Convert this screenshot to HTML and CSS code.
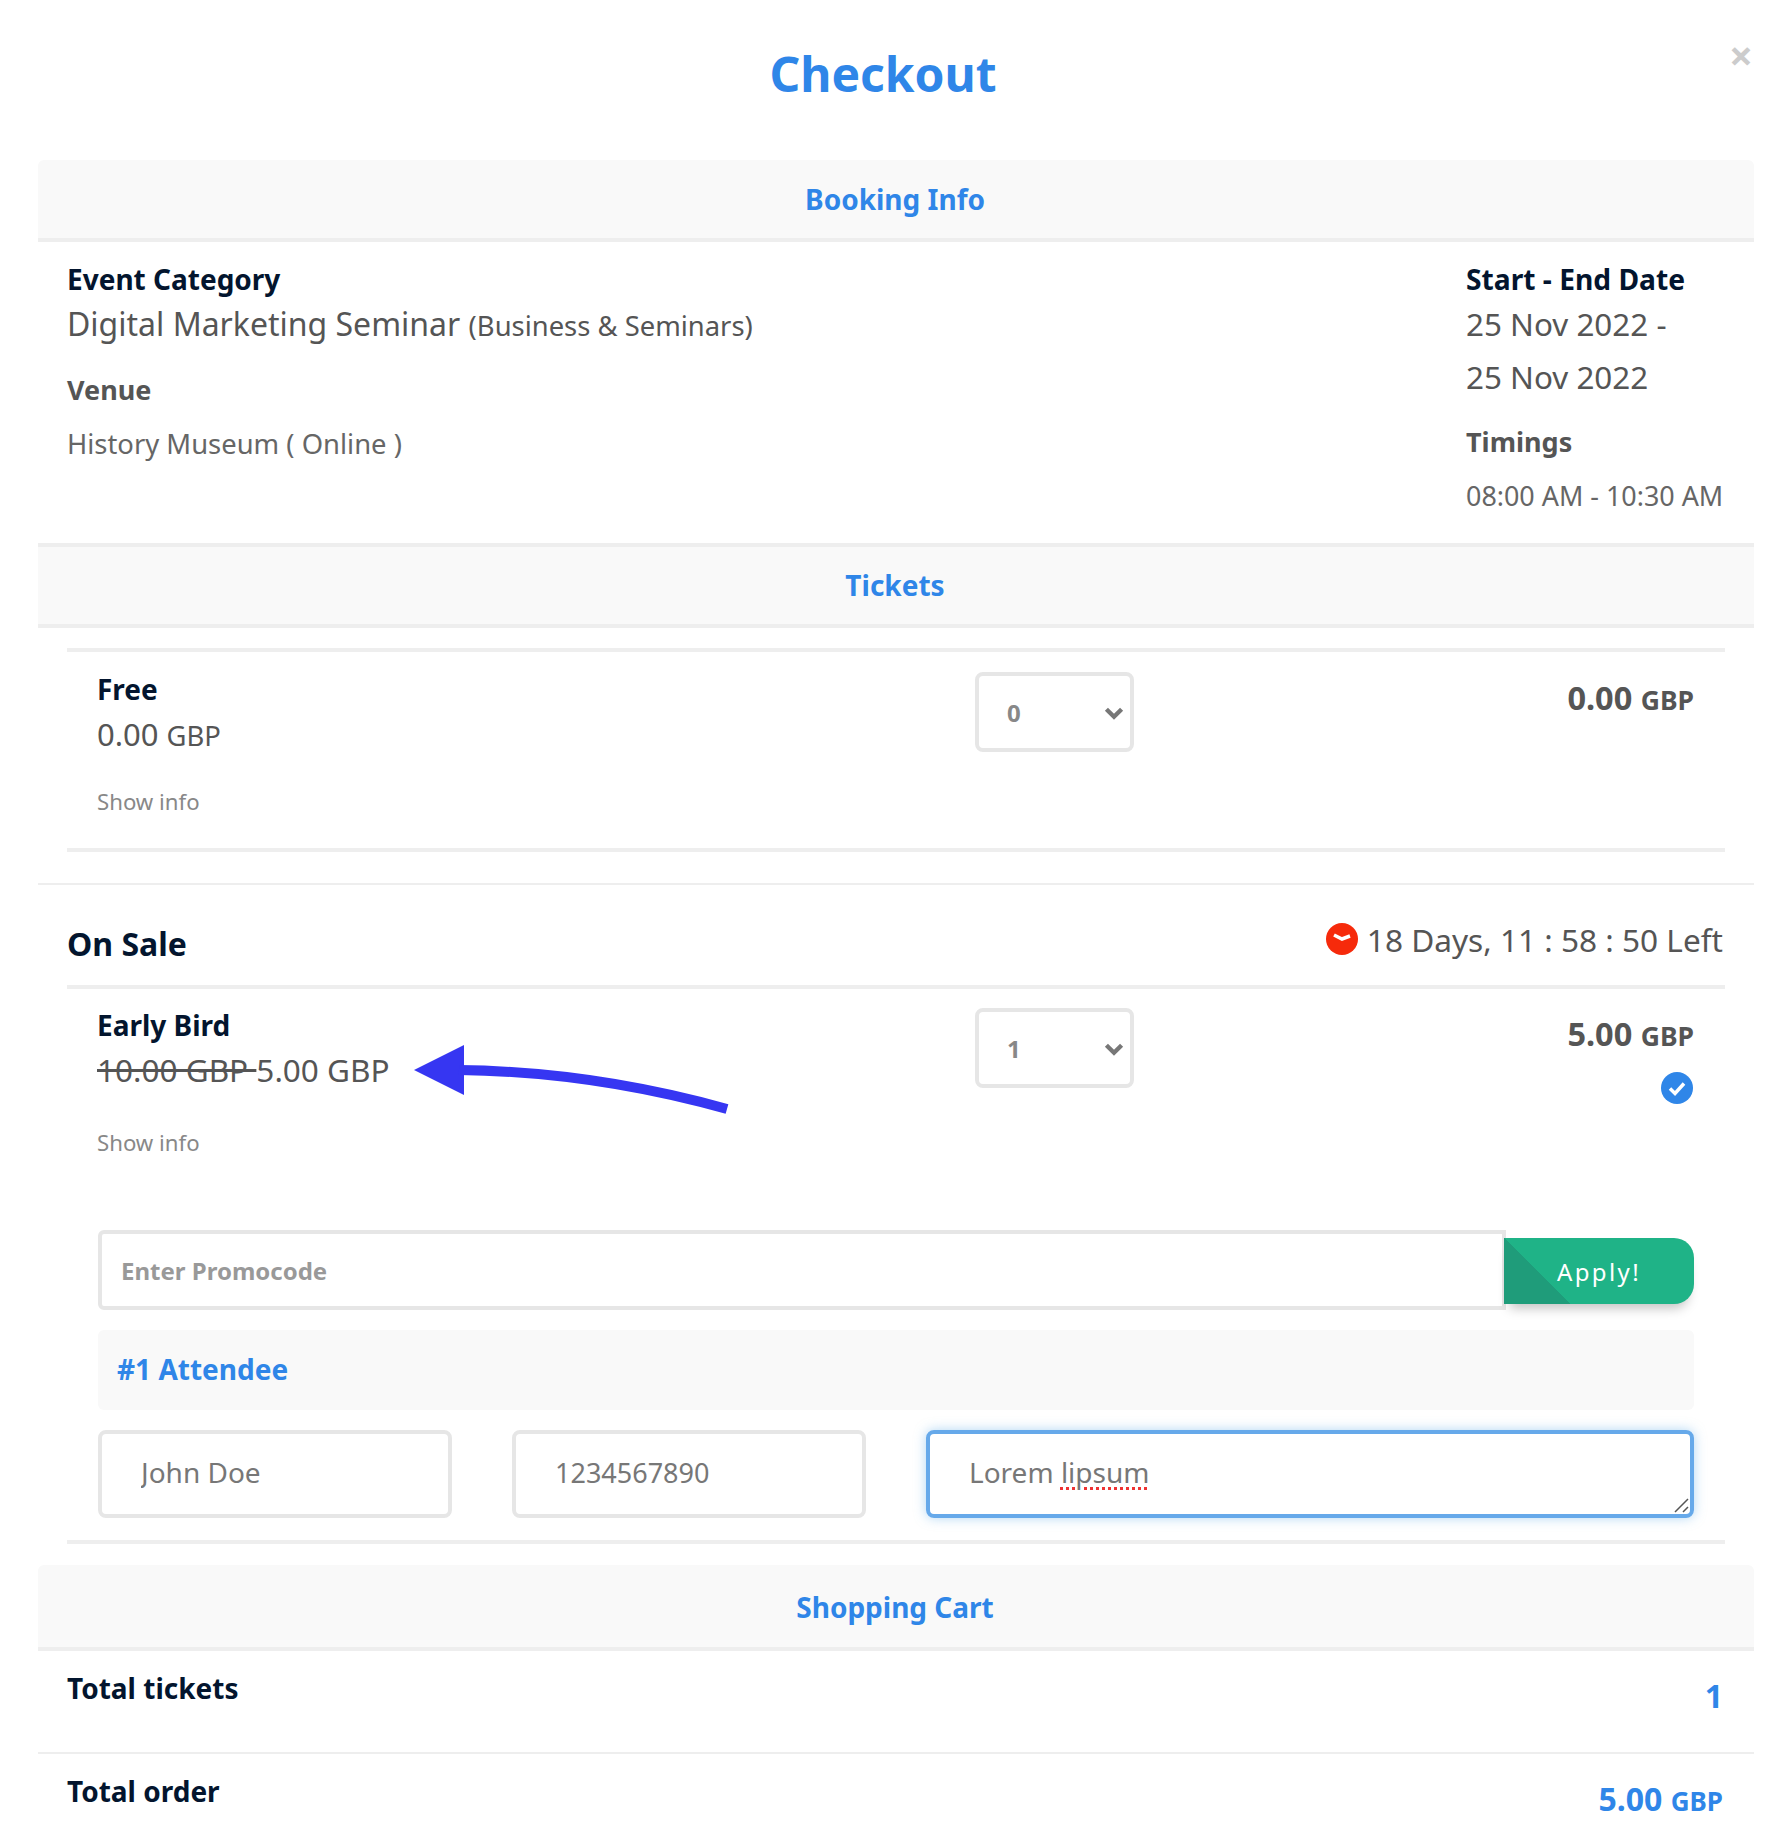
FILE: index.html
```html
<!doctype html>
<html lang="en">

<head>
    <title>Checkout</title>
    <link rel="stylesheet" href="styles.css">
</head>

<body>

    <div class="modal">
        <button class="close">×</button>
        <h1 class="title">Checkout</h1>

        <h3 class="section-head">Booking Info</h3>
        <div class="booking">
            <div>
                <h4 class="label">Event Category</h4>
                <p class="value">Digital Marketing Seminar <small>(Business &amp; Seminars)</small></p>
                <h5 class="sub-label venue">Venue</h5>
                <p class="sub-value">History Museum ( Online )</p>
            </div>
            <div class="booking-date">
                <h4 class="label">Start - End Date</h4>
                <p class="value date">25 Nov 2022 -</p>
                <p class="value date">25 Nov 2022</p>
                <h5 class="sub-label timings">Timings</h5>
                <p class="sub-value time">08:00 AM - 10:30 AM</p>
            </div>
        </div>

        <h3 class="section-head tickets-head">Tickets</h3>
        <div class="ticket ticket-free">
            <div>
                <h4 class="label">Free</h4>
                <p class="value price">0.00 <small>GBP</small></p>
                <a class="show-info">Show info</a>
            </div>
            <div class="select-wrap">
                <select>
                    <option>0</option>
                </select>
                <svg class="chevron" viewBox="0 0 18 12"><path d="M2 2l7 7 7-7" /></svg>
            </div>
            <p class="line-price">0.00 <small>GBP</small></p>
        </div>

        <div class="sale-head">
            <h2>On Sale</h2>
            <p class="countdown">
                <svg class="clock" viewBox="0 0 32 32"><circle cx="16" cy="16" r="16" /><path d="M8 12l8 4 8-3" /></svg>
                18 Days, 11 : 58 : 50 Left
            </p>
        </div>

        <div class="ticket ticket-sale">
            <div>
                <h4 class="label">Early Bird</h4>
                <p class="value price-sale"><s>10.00 GBP </s>5.00 GBP</p>
                <a class="show-info">Show info</a>
            </div>
            <div class="select-wrap">
                <select>
                    <option>1</option>
                </select>
                <svg class="chevron" viewBox="0 0 18 12"><path d="M2 2l7 7 7-7" /></svg>
            </div>
            <div>
                <p class="line-price">5.00 <small>GBP</small></p>
                <svg class="check" viewBox="0 0 32 32"><circle cx="16" cy="16" r="16" /><path d="M9 16.5l5 5 9-10" /></svg>
            </div>

            <div class="promo">
                <input type="text" placeholder="Enter Promocode">
                <button class="apply">Apply!</button>
            </div>
            <div class="attendee">#1 Attendee</div>
            <div class="fields">
                <input type="text" value="John Doe">
                <input class="phone" type="text" value="1234567890">
                <div class="notes">Lorem <span class="typo">lipsum</span>
                    <svg class="grip" viewBox="0 0 16 16"><path d="M2 15L15 2M10 15l5-5" /></svg>
                </div>
            </div>
        </div>

        <!-- arrow drawn on top of the price -->
        <svg class="arrow" viewBox="0 0 320 64">
            <path class="arrow-head" d="M0 25L50 0V50Z" />
            <path class="arrow-tail" d="M45 25C130 26 220 38 313 64" />
        </svg>

        <h3 class="section-head cart-head">Shopping Cart</h3>
        <div class="total total-first">
            <h4 class="label">Total tickets</h4>
            <p class="total-value">1</p>
        </div>
        <div class="total total-last">
            <h4 class="label">Total order</h4>
            <p class="total-value">5.00 <small>GBP</small></p>
        </div>
    </div>

</body>

</html>
```

FILE: styles.css
```css
* {
    box-sizing: border-box;
}

body {
    font-family: "Noto Sans", sans-serif;
    margin: 0;
    padding: 0;
    background-color: white;
    color: #555;
}

h1,
h2,
h3,
h4,
h5,
p {
    margin: 0;
}

.modal {
    position: relative;
    height: 1848px;
    padding: 0 36px 0 38px;
    overflow: hidden;
}

.close {
    position: absolute;
    top: 30px;
    right: 37px;
    padding: 0;
    border: none;
    background: none;
    color: #ccc;
    font-family: inherit;
    font-size: 42px;
    font-weight: bold;
    line-height: 50px;
}

.title {
    height: 160px;
    padding: 42px 26px 0 0;
    text-align: center;
    color: #2f86e8;
    font-size: 48px;
    line-height: 64px;
}

.section-head {
    height: 82px;
    background-color: #f9f9f9;
    border-bottom: 4px solid #eee;
    border-radius: 6px 6px 0 0;
    padding-right: 2px;
    text-align: center;
    color: #2f86e8;
    font-size: 28px;
    line-height: 78px;
}

.tickets-head {
    height: 85px;
    border-top: 4px solid #eee;
    border-radius: 0;
    line-height: 76px;
}

.label {
    color: #03152e;
    font-size: 28px;
    line-height: 40px;
}

.value {
    font-size: 32px;
    line-height: 50px;
}

.value small {
    font-size: 27.4px;
}

.price {
    font-size: 31px;
}

.price-sale {
    font-size: 31.5px;
}

.sub-label {
    font-size: 27px;
    line-height: 40px;
}

.sub-value {
    margin-top: 14px;
    color: #666;
    font-size: 27.4px;
    line-height: 40px;
}

.time {
    font-size: 26.9px;
}

.booking {
    display: flex;
    justify-content: space-between;
    height: 301px;
    padding: 17px 0 0 29px;
}

.booking-date {
    width: 288px;
}

.booking-date .label {
    font-size: 28.2px;
}

.venue {
    margin-top: 19px;
}

.date {
    font-size: 31.4px;
    line-height: 53px;
}

.date:first-of-type {
    margin-top: -2px;
}

.timings {
    margin-top: 19px;
}

.ticket {
    display: grid;
    grid-template-columns: 878px 159px 1fr;
    margin: 0 29px;
    padding: 0 31px 0 30px;
    border-bottom: 4px solid #eee;
}

.ticket-free {
    margin-top: 20px;
    padding-top: 17px;
    padding-bottom: 29px;
    border-top: 4px solid #eee;
}

.ticket-free .select-wrap {
    margin-top: 3px;
}

.ticket-sale {
    padding-top: 16px;
    padding-bottom: 22px;
    border-top: 4px solid #eee;
}

.show-info {
    display: block;
    margin-top: 24px;
    color: #888;
    font-size: 22.2px;
    line-height: 34px;
}

.ticket-sale .show-info {
    margin-top: 31px;
}

.select-wrap {
    position: relative;
    height: 80px;
    margin-top: 3px;
}

.select-wrap select {
    width: 100%;
    height: 100%;
    padding: 0 0 0 28px;
    appearance: none;
    background: white;
    border: 4px solid #e6e6e6;
    border-radius: 8px;
    color: #888;
    font-family: inherit;
    font-size: 24px;
    font-weight: bold;
}

.chevron {
    position: absolute;
    top: 35px;
    right: 10px;
    width: 20px;
    height: 13px;
    fill: none;
    stroke: #777;
    stroke-width: 4;
}

.line-price {
    margin-top: 9px;
    text-align: right;
    font-size: 32.5px;
    font-weight: bold;
    line-height: 40px;
}

.line-price small {
    font-size: 26.5px;
}

.check {
    display: block;
    width: 32px;
    height: 32px;
    margin: 16px 1px 0 auto;
}

.check circle {
    fill: #2f86e8;
}

.check path {
    fill: none;
    stroke: white;
    stroke-width: 3.5;
}

.sale-head {
    display: flex;
    justify-content: space-between;
    height: 102px;
    margin: 31px 0 0;
    padding: 37px 31px 0 29px;
    border-top: 2px solid #eee;
    color: #03152e;
}

.sale-head h2 {
    font-size: 32px;
    line-height: 44px;
}

.countdown {
    display: flex;
    align-items: center;
    gap: 9px;
    height: 40px;
    margin-top: -3px;
    color: #555;
    font-size: 31.6px;
}

.clock {
    width: 32px;
    height: 32px;
}

.clock circle {
    fill: #f62a0b;
}

.clock path {
    fill: none;
    stroke: white;
    stroke-width: 3.5;
}

.promo {
    grid-column: 1 / -1;
    display: flex;
    align-items: center;
    margin: 70px 0 0 1px;
}

.promo input {
    flex: 1;
    height: 80px;
    padding: 0 19px;
    border: 4px solid #e6e6e6;
    border-radius: 6px 0 0 6px;
    color: #888;
    font-family: inherit;
    font-size: 24px;
    font-weight: bold;
}

.promo input::placeholder {
    color: #999;
}

.apply {
    width: 190px;
    height: 66px;
    margin: 2px 0 0 -2px;
    padding-left: 6px;
    border: none;
    border-radius: 0 20px 20px 0;
    background: linear-gradient(to bottom left, transparent 50%, #1f9c7a 50%) left / 66px 66px no-repeat, #1fb387;
    box-shadow: 0 10px 12px -6px rgba(0, 0, 0, 0.25);
    color: white;
    font-family: inherit;
    font-size: 24px;
    letter-spacing: 2.4px;
}

.attendee {
    grid-column: 1 / -1;
    height: 80px;
    margin: 20px 0 0 1px;
    padding-left: 19px;
    background-color: #f9f9f9;
    border-radius: 6px;
    color: #2f86e8;
    font-size: 28px;
    font-weight: bold;
    line-height: 78px;
}

.fields {
    grid-column: 1 / -1;
    display: grid;
    grid-template-columns: 354px 354px 768px;
    gap: 60px;
    margin: 20px 0 0 1px;
}

.fields input,
.notes {
    height: 88px;
    padding: 0 39px 4px;
    border: 4px solid #e6e6e6;
    border-radius: 8px;
    color: #777;
    font-family: inherit;
    font-size: 28px;
}

.fields .phone {
    font-size: 27px;
}

.notes {
    position: relative;
    padding-bottom: 0;
    border-color: #66a9ea;
    box-shadow: 0 0 12px rgba(102, 175, 233, 0.5);
    line-height: 76px;
}

.typo {
    text-decoration: underline dotted #e33;
    text-decoration-thickness: 3px;
    text-underline-offset: 4px;
}

.grip {
    position: absolute;
    right: 1px;
    bottom: 1px;
    width: 16px;
    height: 16px;
    fill: none;
    stroke: #555;
    stroke-width: 1.5;
}

.arrow {
    position: absolute;
    top: 1045px;
    left: 414px;
    width: 320px;
    height: 64px;
    overflow: visible;
}

.arrow-head {
    fill: #3636f2;
}

.arrow-tail {
    fill: none;
    stroke: #3636f2;
    stroke-width: 10;
}

.cart-head {
    margin-top: 21px;
    height: 86px;
    line-height: 84px;
}

.total {
    display: flex;
    justify-content: space-between;
    height: 104px;
    padding: 17px 31px 0 29px;
}

.total-first {
    height: 103px;
    border-bottom: 2px solid #eee;
}

.total-value {
    margin-top: 8px;
    color: #2f86e8;
    font-size: 32px;
    font-weight: bold;
    line-height: 40px;
}

.total-value small {
    font-size: 26px;
}
```
